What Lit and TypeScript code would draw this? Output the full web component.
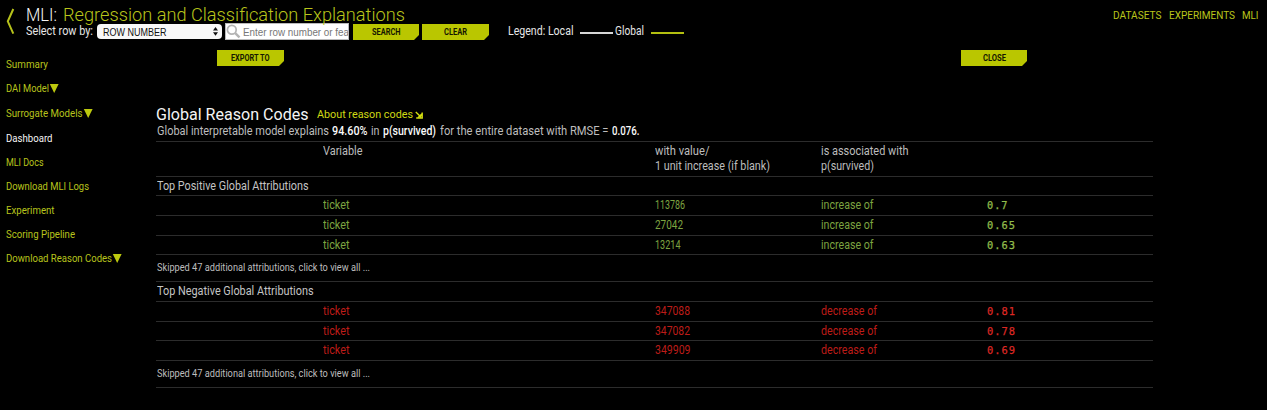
import { LitElement, html, css, nothing } from "lit";
import { customElement, property } from "lit/decorators.js";

/** A single line of text condensed or expanded to a given width. */
@customElement("fit-text")
class FitText extends LitElement {
  @property() text = "";
  @property({ type: Number }) w = 0;

  static styles = css`
    :host { display: inline-block; flex: none; white-space: pre; }
    .run { display: inline-block; transform-origin: 0 50%; vertical-align: top; }
  `;

  render() {
    return html`<span class="run">${this.text}</span>`;
  }

  updated() {
    const run = this.renderRoot.querySelector(".run") as HTMLElement;
    this.style.width = "auto";
    run.style.transform = "none";
    const natural = run.getBoundingClientRect().width;
    this.style.width = `${this.w}px`;
    if (natural > 0) run.style.transform = `scaleX(${this.w / natural})`;
  }
}

const t = (text: string, w: number, cls = "") =>
  html`<fit-text class=${cls} .text=${text} .w=${w}></fit-text>`;

type Item = { label: string; w: number; gap: string; menu?: boolean; active?: boolean };
const items: Item[] = [
  { label: "Summary", w: 42, gap: "h24" },
  { label: "DAI Model", w: 43, gap: "h24", menu: true },
  { label: "Surrogate Models", w: 76.5, gap: "h25", menu: true },
  { label: "Dashboard", w: 46.5, gap: "h25", active: true },
  { label: "MLI Docs", w: 37.5, gap: "h24" },
  { label: "Download MLI Logs", w: 83, gap: "h24" },
  { label: "Experiment", w: 48.5, gap: "h24" },
  { label: "Scoring Pipeline", w: 69, gap: "h24" },
  { label: "Download Reason Codes", w: 106, gap: "h24", menu: true },
];

type Row = { value: string; w: number; amount: string; aw: number; short?: boolean };
const positive: Row[] = [
  { value: "113786", w: 30, amount: "0.7", aw: 21.5 },
  { value: "27042", w: 28, amount: "0.65", aw: 29 },
  { value: "13214", w: 25.5, amount: "0.63", aw: 29, short: true },
];
const negative: Row[] = [
  { value: "347088", w: 35, amount: "0.81", aw: 29 },
  { value: "347082", w: 35, amount: "0.78", aw: 29, short: true },
  { value: "349909", w: 35.5, amount: "0.69", aw: 29 },
];

@customElement("app-root")
class AppRoot extends LitElement {
  static styles = css`
    :host {
      display: block; width: 1267px; height: 410px; overflow: hidden;
      background: #000; color: #bdbdbd;
      font-family: Roboto, "Liberation Sans", sans-serif; font-size: 12px; line-height: 18px;
    }
    * { box-sizing: border-box; }
    svg { display: block; flex: none; }
    .header { display: flex; height: 50px; }
    .back { padding: 8px 0 0 6px; width: 26px; }
    .left { width: 1087px; }
    .title { display: flex; height: 23px; padding-top: 4px; font-size: 18px; line-height: 22px; font-weight: 300; gap: 6px; color: #f4f4f4; }
    .lime { color: #b9c51b; }
    .tools { display: flex; height: 17px; line-height: 17px; color: #e6e6e6; }
    .select { display: flex; align-items: center; justify-content: space-between; width: 125px; height: 15px; margin: 1px 3px 0 4px; padding: 0 4px 0 6px; background: #f8f8f8; border-radius: 4px; color: #111; font: 10.5px/15px "Liberation Sans", sans-serif; }
    .select fit-text { padding-top: 1px; }
    .search { display: flex; width: 124px; height: 17px; background: #fff; border: 1px solid #bbb; color: #777; overflow: hidden; font: 10.5px/16px "Liberation Sans", sans-serif; }
    .search svg { margin-right: 2px; }
    .btn { display: flex; justify-content: center; width: 67px; height: 16px; background: #bac600; color: #151700; font-size: 9px; font-weight: 700; line-height: 16px; clip-path: polygon(0 0, 100% 0, 100% 11px, calc(100% - 5px) 100%, 0 100%); }
    .tools .btn { margin-top: 1px; }
    .b1 { margin-left: 4px; width: 66px; }
    .b2 { margin-left: 3px; }
    .legend { display: flex; margin-left: 19px; }
    .rule { width: 33px; height: 2px; margin: 9px 2px 0 6.5px; background: #d6d6d6; }
    .rule.g { background: #b3bf10; }
    .nav { display: flex; gap: 7px; padding-top: 7px; font-size: 11px; }
    .actions { display: flex; height: 16px; padding-left: 217px; gap: 677px; }
    .actions .btn.close { width: 66px; }
    .body { display: flex; }
    .side { width: 156px; padding: 0 0 0 6px; font-size: 10.5px; margin-top: -16px; color: #b7c31c; }
    .item { display: flex; align-items: flex-end; line-height: 18px; }
    .item svg { margin-bottom: 5.5px; }
    .h24 { height: 24px; }
    .h25 { height: 25px; }
    .active { color: #f5f5f5; }
    .main { width: 997px; padding-top: 36px; }
    .head { display: flex; height: 21px; color: #f4f4f4; }
    .head .h { font-size: 17px; line-height: 24px; }
    .about { margin-left: 8px; font-size: 11.5px; line-height: 24px; color: #cfd913; }
    .head svg { margin: 9px 0 0 2.5px; }
    .para { display: flex; height: 18px; padding-left: .5px; gap: 3.5px; line-height: 17px; }
    .para .b { color: #fafafa; font-weight: 500; }
    .line { border-top: 1px solid #2c2c2c; }
    .group, .skip { padding-left: .5px; }
    .grid { display: grid; grid-template-columns: 166.5px 332px 166px 166.5px 1fr; }
    .cols { height: 35px; line-height: 15px; padding-top: 2px; }
    .cols div { height: 15px; }
    .group { height: 19px; line-height: 18px; display: flex; color: #c4c4c4; }
    .group.n { height: 20px; }
    .row { height: 20px; }
    .row.short { height: 19px; }
    .pos { color: #7da440; }
    .neg { color: #bd1c18; }
    .amt { font-family: "DejaVu Sans Mono", monospace; font-size: 10.5px; line-height: 18px; letter-spacing: 1px; -webkit-text-stroke: .25px currentColor; }
    .pos .amt { color: #92bd4c; }
    .neg .amt { color: #dd2824; }
    .skip { height: 27px; display: flex; font-size: 10px; line-height: 26px; }
    .end { height: 1px; }
  `;

  private btn(label: string, w: number, cls = "") {
    return html`<div class="btn ${cls}">${t(label, w)}</div>`;
  }

  private row(r: Row, tone: string, verb: string, vw: number) {
    return html`<div class="line grid row ${tone} ${r.short ? "short" : ""}">
      <span></span>${t("ticket", 26.5)}${t(r.value, r.w)}${t(verb, vw)}${t(r.amount, r.aw, "amt")}
    </div>`;
  }

  render() {
    return html`
      <div class="header">
        <div class="back">
          <svg width="9" height="27" viewBox="0 0 9 27"><path d="M7.3 1 L1.8 13.3 L7.3 25.7" fill="none" stroke="#b6c21a" stroke-width="2"/></svg>
        </div>
        <div class="left">
          <div class="title">${t("MLI:", 31)}${t("Regression and Classification Explanations", 342, "lime")}</div>
          <div class="tools">
            ${t("Select row by:", 67)}
            <div class="select">${t("ROW NUMBER", 63.5)}
              <svg width="5" height="9" viewBox="0 0 5 9"><path d="M2.5 0 L5 3.6 H0Z M0 5.2 H5 L2.5 8.8Z" fill="#111"/></svg>
            </div>
            <div class="search">
              <svg width="15" height="15" viewBox="0 0 15 15"><circle cx="5.8" cy="5.8" r="4.4" fill="none" stroke="#b4b4b4" stroke-width="1.7"/><path d="M9.2 9.2 L13.5 13.3" stroke="#b4b4b4" stroke-width="2.4"/></svg>
              ${t("Enter row number or fea", 106)}
            </div>
            ${this.btn("SEARCH", 28.5, "b1")}${this.btn("CLEAR", 23, "b2")}
            <div class="legend">
              ${t("Legend: Local", 65.5)}<div class="rule"></div>${t("Global", 29)}<div class="rule g"></div>
            </div>
          </div>
        </div>
        <div class="nav lime">${t("DATASETS", 48.5)}${t("EXPERIMENTS", 66)}${t("MLI", 16.5)}</div>
      </div>
      <div class="actions">${this.btn("EXPORT TO", 38.5)}${this.btn("CLOSE", 23, "close")}</div>
      <div class="body">
        <div class="side">
          ${items.map((i) => html`<div class="item ${i.gap} ${i.active ? "active" : ""}">
            ${t(i.label, i.w)}${i.menu
              ? html`<svg width="10" height="9" viewBox="0 0 10 9"><path d="M.8 0H9.6L5.2 9Z" fill="#bdc90e"/></svg>`
              : nothing}
          </div>`)}
        </div>
        <div class="main">
          <div class="head">
            ${t("Global Reason Codes", 152.5, "h")}${t("About reason codes", 96, "about")}
            <svg width="8" height="8" viewBox="0 0 8 8"><path d="M.8 1 L6 6 M1.2 7 H7.2 V1.4 M3.2 6.6 L6.8 3" fill="none" stroke="#d5df10" stroke-width="1.4"/></svg>
          </div>
          <div class="para">
            ${t("Global interpretable model explains", 172)}${t("94.60%", 35.5, "b")}${t("in", 8.5)}${t("p(survived)", 53, "b")}${t("for the entire dataset with RMSE =", 168.5)}${t("0.076.", 27.5, "b")}
          </div>
          <div class="line grid cols">
            <span></span>
            <div>${t("Variable", 39.5)}</div>
            <div><div>${t("with value/", 54.5)}</div><div>${t("1 unit increase (if blank)", 115)}</div></div>
            <div><div>${t("is associated with", 87.5)}</div><div>${t("p(survived)", 53)}</div></div>
          </div>
          <div class="line group">${t("Top Positive Global Attributions", 151.5)}</div>
          ${positive.map((r) => this.row(r, "pos", "increase of", 52.5))}
          <div class="line skip">${t("Skipped 47 additional attributions, click to view all ...", 213)}</div>
          <div class="line group n">${t("Top Negative Global Attributions", 156.5)}</div>
          ${negative.map((r) => this.row(r, "neg", "decrease of", 56))}
          <div class="line skip">${t("Skipped 47 additional attributions, click to view all ...", 213)}</div>
          <div class="line end"></div>
        </div>
      </div>
    `;
  }
}
